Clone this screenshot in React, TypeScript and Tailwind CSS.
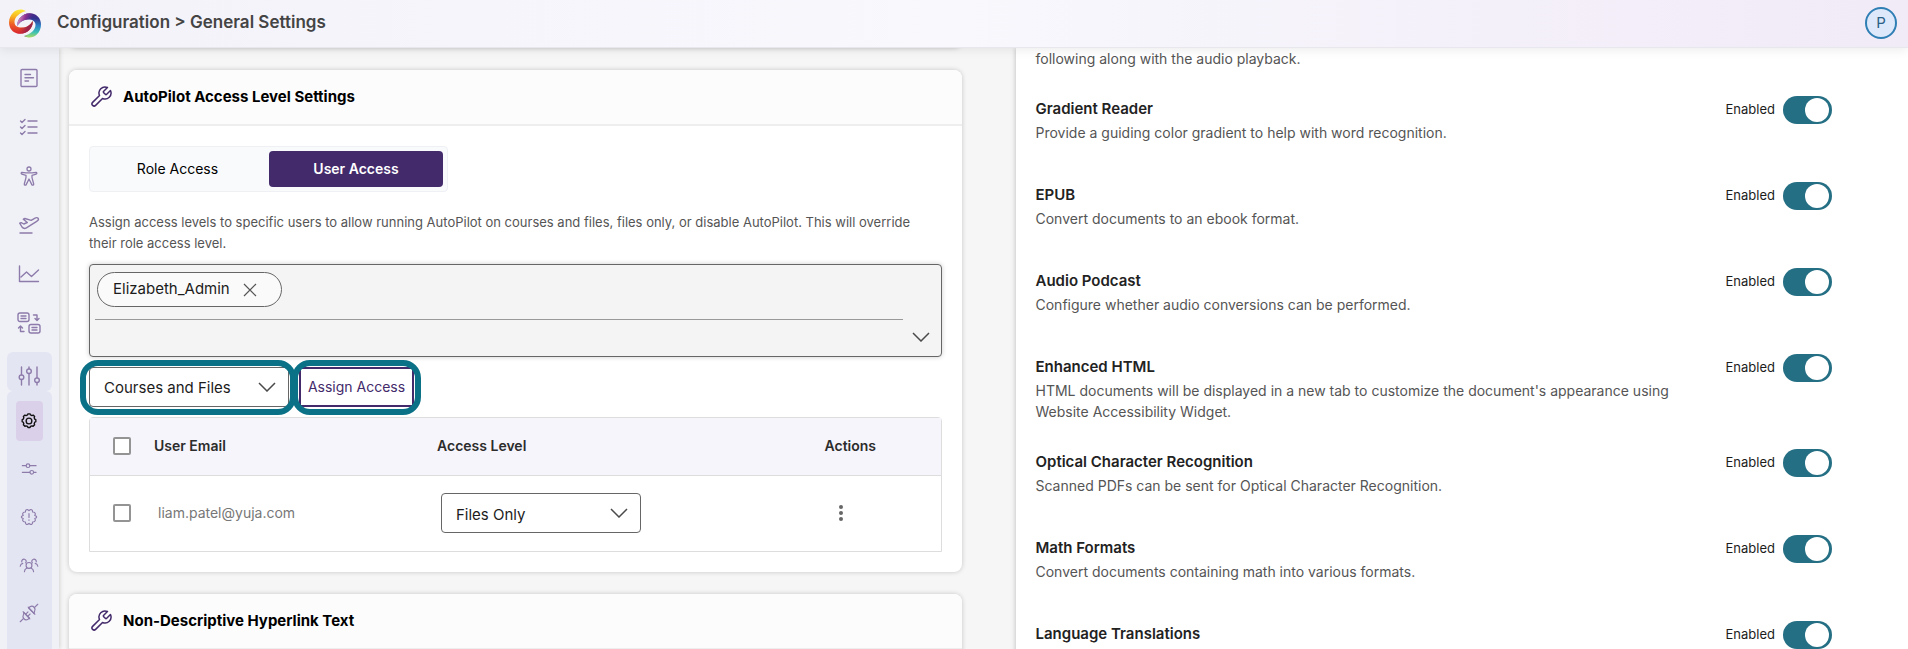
import React, { useState } from "react";

type IconProps = { children: React.ReactNode; size?: string; width?: number };

function Glyph({ children, size = "size-6", width = 1 }: IconProps) {
  return (
    <svg
      viewBox="0 0 24 24"
      fill="none"
      stroke="currentColor"
      strokeWidth={width}
      strokeLinecap="round"
      strokeLinejoin="round"
      className={size}
      aria-hidden="true"
    >
      {children}
    </svg>
  );
}

const gearPath =
  "M10 3.900l.6-1.400h2.800l.6 1.400 2 .8 1.500-.6 2 2-.6 1.500.8 2 1.400.6v2.800l-1.400.6-.8 2 .6 1.500-2 2-1.500-.6-2 .8-.6 1.400h-2.800l-.6-1.400-2-.8-1.500.6-2-2 .6-1.500-.8-2-1.400-.6v-2.800l1.400-.6.8-2-.6-1.500 2-2 1.500.6z";

const topItems: { label: string; icon: React.ReactNode }[] = [
  {
    label: "Reports",
    icon: (
      <Glyph width={1.400}>
        <rect x="4" y="3.500" width="16" height="17" rx="1" />
        <path d="M8 8.500h5.500M8 11.800h8.500M8 15h3.500" />
      </Glyph>
    ),
  },
  {
    label: "Tasks",
    icon: (
      <Glyph width={1.400}>
        <path d="M11 6h9M11 12h9M11 18h9" />
        <path d="M3.500 6l1.500 1.500L8 4.500M3.500 12L5 13.500l3-3M3.500 18L5 19.500l3-3" />
      </Glyph>
    ),
  },
  {
    label: "Accessibility",
    icon: (
      <Glyph width={1.300}>
        <circle cx="12" cy="5" r="2" />
        <path d="M5 8.300c-1 0-1.200 1.500-.2 1.800L9 11.300v2.400L7.300 20c-.2 1.300 1.400 1.600 1.900.6L12 15l2.800 5.600c.5 1 2.100.7 1.900-.6L15 13.700v-2.400l4.200-1.200c1-.3.8-1.800-.2-1.800-2.300.3-4.600.6-7 .6s-4.700-.3-7-.6z" />
      </Glyph>
    ),
  },
  {
    label: "AutoPilot",
    icon: (
      <Glyph width={1.400}>
        <path d="M3 20h12" />
        <path d="M2.700 10.200l1.500-.6 2.600 1.400 3.500-1.500-4-3.300 1.600-.7 6.300 1.800 3.400-2c1.400-.8 3-.8 3.700.2.5 1-.2 2-1.600 2.800L9.400 14.900c-1.500.8-3.300.5-4.400-.9z" />
      </Glyph>
    ),
  },
  {
    label: "Analytics",
    icon: (
      <Glyph width={1.400}>
        <path d="M2.500 4v15.500h19M4 15l5.500-5 5 4.500L21.500 8" />
      </Glyph>
    ),
  },
  {
    label: "Conversions",
    icon: (
      <Glyph width={1.400}>
        <rect x="1" y="2" width="11" height="8.500" rx="2" />
        <rect x="12" y="13.500" width="11" height="8.500" rx="2" />
        <path d="M4 5h5M4 7.500h5M15 16.500h5M15 19h5" />
        <path d="M16.500 4h3.500v5M18 7.500L20 9.500l2-2M7 20.500H3.500v-5.500M1.500 17l2-2 2 2" />
      </Glyph>
    ),
  },
];

const subItems: { label: string; icon: React.ReactNode }[] = [
  {
    label: "General Settings",
    icon: (
      <Glyph size="size-[18px]" width={1.800}>
        <path d={gearPath} />
        <circle cx="12" cy="12" r="3.800" />
      </Glyph>
    ),
  },
  {
    label: "Preferences",
    icon: (
      <Glyph size="size-5" width={1.400}>
        <path d="M4 8h4.500M13 8h7.500M4 16h9M17.500 16h3" />
        <circle cx="10.800" cy="8" r="2.200" />
        <circle cx="15.300" cy="16" r="2.200" />
      </Glyph>
    ),
  },
  {
    label: "Alerts",
    icon: (
      <Glyph size="size-5" width={1.400}>
        <path d="M8.500 3.500c.8-.8 2.200-.6 3.500.8 1.300-1.400 2.700-1.600 3.500-.8s.8 1.500.8 2.500c1.700-.1 2.900.5 3.200 1.600s0 1.800-.6 2.600c1.500.4 2.300 1 2.300 1.800s-.8 1.400-2.300 1.800c.6.8.9 1.500.6 2.600s-1.500 1.700-3.200 1.600c0 1 0 1.700-.8 2.500s-2.200.6-3.500-.8c-1.300 1.400-2.700 1.600-3.500.8s-.8-1.500-.8-2.500c-1.700.1-2.900-.5-3.200-1.600s0-1.800.6-2.600c-1.500-.4-2.300-1-2.300-1.800s.8-1.400 2.300-1.800c-.6-.8-.9-1.500-.6-2.600S6 5.900 7.700 6c0-1 0-1.700.8-2.500z" />
        <path d="M12 8v4.500M12 15.500v.500" />
      </Glyph>
    ),
  },
  {
    label: "Groups",
    icon: (
      <Glyph size="size-5" width={1.400}>
        <circle cx="12" cy="12.500" r="3.500" />
        <path d="M6.500 20c0-2 1-3.500 3-4.500M17.500 20c0-2-1-3.500-3-4.500" />
        <path d="M3.300 8.200a2.700 2.700 0 1 1 4.700 1.300M20.700 8.200A2.700 2.700 0 1 0 16 9.500M1.500 13.500c.2-1.900 1.200-3 3-3.500M22.500 13.500c-.2-1.900-1.200-3-3-3.500" />
      </Glyph>
    ),
  },
  {
    label: "Integrations",
    icon: (
      <Glyph size="size-5" width={1.400}>
        <path d="M1.500 22.500l4-4M22.500 1.500l-4 4" />
        <path d="M6 11.500l6.500 6.500-1.700 1.500c-1.600 1-3.600.8-4.900-.6s-1.500-3.300-.6-4.900zM18 12.500L11.500 6l1.700-1.500c1.600-1 3.600-.8 4.900.6s1.500 3.300.6 4.900z" />
        <path d="M8.500 13l2.300-2.300M11 15.500l2.300-2.300M5 10.500l8 8.500M11 5l8 8.500" />
      </Glyph>
    ),
  },
];

const features: { name: string; text?: string }[] = [
  { name: "Gradient Reader", text: "Provide a guiding color gradient to help with word recognition." },
  { name: "EPUB", text: "Convert documents to an ebook format." },
  { name: "Audio Podcast", text: "Configure whether audio conversions can be performed." },
  {
    name: "Enhanced HTML",
    text: "HTML documents will be displayed in a new tab to customize the document's appearance using Website Accessibility Widget.",
  },
  {
    name: "Optical Character Recognition",
    text: "Scanned PDFs can be sent for Optical Character Recognition.",
  },
  { name: "Math Formats", text: "Convert documents containing math into various formats." },
  { name: "Language Translations" },
];

function Logo() {
  const swirl =
    "M17 2C14 0 8-.5 4.500 3.200C1 6.500-.5 11 .2 15.500C1 21 5.500 25 11.500 24.800C18.500 24.500 24.500 18.500 23.700 12C21 16.500 17.500 18.500 13 18.600C8.500 18.700 5.500 16.800 5.500 13C5.500 8 10.500 4 17 2Z";
  return (
    <svg viewBox="0 0 32 29" className="h-[29px] w-8" aria-hidden="true">
      <defs>
        <linearGradient id="warm" x1="12" y1="0" x2="10" y2="25" gradientUnits="userSpaceOnUse">
          <stop offset="0" stopColor="#f9ee3a" />
          <stop offset="0.300" stopColor="#f8b822" />
          <stop offset="0.650" stopColor="#ee5a26" />
          <stop offset="1" stopColor="#d9242f" />
        </linearGradient>
        <linearGradient id="wine" x1="12" y1="14" x2="24" y2="18" gradientUnits="userSpaceOnUse">
          <stop offset="0" stopColor="#b3203f" stopOpacity="0" />
          <stop offset="0.600" stopColor="#a0224a" />
          <stop offset="1" stopColor="#8d2b50" />
        </linearGradient>
        <linearGradient id="cool" x1="12" y1="0" x2="10" y2="25" gradientUnits="userSpaceOnUse">
          <stop offset="0" stopColor="#b5dc5a" />
          <stop offset="0.250" stopColor="#3cc1b4" />
          <stop offset="0.500" stopColor="#2a86c8" />
          <stop offset="0.800" stopColor="#33308e" />
          <stop offset="1" stopColor="#4b2a86" />
        </linearGradient>
        <linearGradient id="plum" x1="10" y1="14" x2="24" y2="18" gradientUnits="userSpaceOnUse">
          <stop offset="0" stopColor="#6a2a8c" stopOpacity="0" />
          <stop offset="0.500" stopColor="#8d3392" />
          <stop offset="1" stopColor="#e29cc6" />
        </linearGradient>
      </defs>
      <path d={swirl} fill="url(#warm)" />
      <path d={swirl} fill="url(#wine)" />
      <g transform="rotate(180 16 14.500)">
        <path d={swirl} fill="url(#cool)" />
        <path d={swirl} fill="url(#plum)" />
      </g>
    </svg>
  );
}

function Wrench() {
  return (
    <span className="text-[#432a6b]">
      <Glyph size="size-6" width={1.500}>
        <path d="M14.700 6.300a1 1 0 0 0 0 1.400l1.600 1.600a1 1 0 0 0 1.400 0l3.770-3.770a6 6 0 0 1-7.940 7.940l-6.910 6.910a2.120 2.120 0 0 1-3-3l6.910-6.910a6 6 0 0 1 7.940-7.940l-3.760 3.760z" />
      </Glyph>
    </span>
  );
}

function Chevron() {
  return (
    <svg
      viewBox="0 0 18 10"
      fill="none"
      stroke="#4a4a4a"
      strokeWidth="1.500"
      className="h-[10px] w-[18px]"
      aria-hidden="true"
    >
      <path d="M1 1l8 8 8-8" />
    </svg>
  );
}

function LevelSelect({ label, initial }: { label: string; initial: string }) {
  return (
    <div className="relative w-[200px]">
      <select
        aria-label={label}
        defaultValue={initial}
        className="h-10 w-full appearance-none rounded border border-[#666] bg-white pt-[2px] pr-10 pl-[14px] text-[15px] text-[#1c1c1c]"
      >
        <option>Courses and Files</option>
        <option>Files Only</option>
        <option>Disabled</option>
      </select>
      <span className="pointer-events-none absolute top-[15px] right-[13px]">
        <Chevron />
      </span>
    </div>
  );
}

function CheckBox({ label }: { label: string }) {
  return (
    <input
      type="checkbox"
      aria-label={label}
      className="block size-[18px] appearance-none rounded-[2px] border-2 border-[#949494] bg-white checked:bg-[#432a6b]"
    />
  );
}

function CardHeader({ title }: { title: string }) {
  return (
    <div className="flex h-14 items-center gap-[10px] rounded-t-lg border-b-2 border-[#eee] bg-[#fcfcfc] pl-5">
      <Wrench />
      <h2 className="text-[15px] font-bold text-black">{title}</h2>
    </div>
  );
}

const cardClass = "rounded-lg bg-white shadow-[0_0_5px_rgba(0,0,0,0.2)]";

function Feature({ name, text }: { name: string; text?: string }) {
  const [on, setOn] = useState(true);
  const id = name.toLowerCase().replace(/ /g, "-");
  return (
    <div className="flex min-h-[86px] items-start justify-between pb-[27px]">
      <div className="max-w-[640px]">
        <h3 className="text-[15px] leading-[26px] font-semibold text-[#222]">{name}</h3>
        {text && <p className="text-sm leading-[21px] text-[#555]">{text}</p>}
      </div>
      <div className="flex items-center gap-2">
        <label htmlFor={id} className="text-[13px] text-[#1c1c1c]">
          Enabled
        </label>
        <input
          id={id}
          type="checkbox"
          role="switch"
          checked={on}
          onChange={() => setOn(!on)}
          className="flex h-7 w-[49px] appearance-none items-center rounded-full bg-[#8a8a8a] px-[3px] before:size-6 before:rounded-full before:bg-white before:content-[''] checked:justify-end checked:bg-[#256f84]"
        />
      </div>
    </div>
  );
}

export default function App() {
  return (
    <div className="flex h-screen flex-col overflow-hidden bg-[#f6f6f6] font-['Inter',sans-serif]">
      <header className="relative z-10 flex h-12 shrink-0 items-center border-b border-[#e9e7ee] bg-linear-to-r from-[#f4f2f9] via-[#f8f8fd] to-[#f1eaf7] pr-[11px] pb-px pl-[9px] shadow-[0_2px_10px_rgba(0,0,0,0.08)]">
        <Logo />
        <h1 className="ml-4 text-[17px] font-semibold text-[#444]">Configuration &gt; General Settings</h1>
        <button
          type="button"
          aria-label="Profile"
          className="ml-auto size-8 rounded-full border-2 border-[#2f7fb5] bg-[#dde9fb] text-[15px] text-[#2b5f86]"
        >
          P
        </button>
      </header>

      <div className="flex min-h-0 flex-1">
        <nav className="flex w-[59px] shrink-0 flex-col items-center bg-[#f0f1f7] pt-[5px] pr-px text-[#8d7bab] shadow-[0_0_5px_rgba(0,0,0,0.2)]">
          {topItems.map((item) => (
            <a key={item.label} href="#" aria-label={item.label} className="flex h-[49px] w-full items-center justify-center">
              {item.icon}
            </a>
          ))}
          <a
            href="#"
            aria-label="Configuration"
            className="mt-[5px] flex h-[39px] w-[45px] shrink-0 items-center justify-center rounded-md bg-[#e4e5f2] pt-[9px]"
          >
            <Glyph width={1.400}>
              <path d="M4.500 3v8M4.500 15.500V21M12 3v2M12 9.500V21M20 3v11M20 18.500V21" />
              <circle cx="4.500" cy="13.200" r="2.300" />
              <circle cx="12" cy="7.200" r="2.300" />
              <circle cx="20" cy="16.200" r="2.300" />
            </Glyph>
          </a>
          <div className="flex w-[45px] flex-1 flex-col items-center gap-2 rounded-t-md bg-[#e4e5f2] pt-[10px]">
            {subItems.map((item, i) => (
              <a
                key={item.label}
                href="#"
                aria-label={item.label}
                className={
                  i === 0
                    ? "flex h-10 w-[27px] shrink-0 items-center justify-center rounded bg-[#dad0e9] text-[#111]"
                    : "flex h-10 w-[27px] shrink-0 items-center justify-center rounded"
                }
              >
                {item.icon}
              </a>
            ))}
          </div>
        </nav>

        <main className="grid min-w-0 flex-1 grid-cols-2 gap-[54px] pl-[10px]">
          <div className="flex min-w-0 flex-col gap-[22px]">
            <div className={`${cardClass} -mt-6 h-6 shrink-0`} />

            <section className={`${cardClass} shrink-0`}>
              <CardHeader title="AutoPilot Access Level Settings" />
              <div className="px-5 pt-5 pb-5">
                <div className="flex h-[46px] w-[359px] gap-2 rounded border border-[#eef0f4] bg-[#f9fafc] p-1 text-sm">
                  <button type="button" className="flex-1 text-black">
                    Role Access
                  </button>
                  <button type="button" className="w-[174px] rounded bg-[#432a6b] font-semibold text-white">
                    User Access
                  </button>
                </div>

                <p className="mt-5 pr-2 text-[13px] leading-[21px] text-[#555]">
                  Assign access levels to specific users to allow running AutoPilot on courses and files, files only, or
                  disable AutoPilot. This will override their role access level.
                </p>

                <div className="mt-[10px] flex h-[93px] items-end rounded border border-[#666] bg-[#f4f4f4] pr-[11px] shadow-[0_0_5px_rgba(0,0,0,0.2)]">
                  <div className="ml-[5px] flex h-full flex-1 flex-col">
                    <div className="flex h-[55px] items-start border-b border-[#999] pt-[7px] pl-[2px]">
                      <span className="flex h-[35px] w-[185px] items-center gap-[13px] rounded-full border border-[#666] bg-[#fafafa] pl-[15px] text-[15px] text-[#1c1c1c]">
                        Elizabeth_Admin
                        <button type="button" aria-label="Remove Elizabeth_Admin">
                          <svg viewBox="0 0 14 14" stroke="#555" strokeWidth="1.200" className="size-[14px]" aria-hidden="true">
                            <path d="M1 1l12 12M13 1L1 13" />
                          </svg>
                        </button>
                      </span>
                    </div>
                    <input aria-label="Search users" className="w-full flex-1 bg-transparent px-2 text-[15px] outline-none" />
                  </div>
                  <button type="button" aria-label="Show users" className="mb-[14px] ml-[9px]">
                    <Chevron />
                  </button>
                </div>

                <div className="mt-[10px] flex items-center gap-[10px]">
                  <div className="relative">
                    <LevelSelect label="Access level to assign" initial="Courses and Files" />
                    <span className="pointer-events-none absolute -top-[7px] -right-[7px] -bottom-2 -left-[9px] rounded-[18px] border-6 border-[#0b7186]" />
                  </div>
                  <div className="relative">
                    <button
                      type="button"
                      className="h-10 w-[115px] rounded-[2px] border-2 border-[#432a6b] bg-white text-sm text-[#432a6b]"
                    >
                      Assign Access
                    </button>
                    <span className="pointer-events-none absolute -top-[7px] -right-[7px] -bottom-2 -left-[7px] rounded-[18px] border-6 border-[#0b7186]" />
                  </div>
                </div>

                <div className="mt-[10px] rounded-t border border-[#ddd]">
                  <table className="w-full table-fixed text-left text-sm">
                    <colgroup>
                      <col className="w-[64px]" />
                      <col className="w-[283px]" />
                      <col />
                      <col className="w-[116px]" />
                    </colgroup>
                    <thead>
                      <tr className="h-[57px] border-b border-[#ddd] bg-[#f6f5fb] text-[#2c2c2c]">
                        <th className="pl-[23px]">
                          <CheckBox label="Select all users" />
                        </th>
                        <th className="font-semibold">User Email</th>
                        <th className="font-semibold">Access Level</th>
                        <th className="font-semibold">Actions</th>
                      </tr>
                    </thead>
                    <tbody>
                      <tr className="h-[76px]">
                        <td className="pl-[23px]">
                          <CheckBox label="Select liam.patel@yuja.com" />
                        </td>
                        <td className="pl-1 text-[#777]">liam.patel@yuja.com</td>
                        <td className="pl-1">
                          <LevelSelect label="Access level for liam.patel@yuja.com" initial="Files Only" />
                        </td>
                        <td className="pl-[14px]">
                          <button type="button" aria-label="More actions" className="block">
                            <svg viewBox="0 0 4 16" fill="#666" className="h-4 w-1" aria-hidden="true">
                              <circle cx="2" cy="2" r="2" />
                              <circle cx="2" cy="8" r="2" />
                              <circle cx="2" cy="14" r="2" />
                            </svg>
                          </button>
                        </td>
                      </tr>
                    </tbody>
                  </table>
                </div>
              </div>
            </section>

            <section className={`${cardClass} h-40 shrink-0`}>
              <CardHeader title="Non-Descriptive Hyperlink Text" />
            </section>
          </div>

          <section className="bg-white pr-[76px] pl-5 shadow-[0_0_5px_rgba(0,0,0,0.25)]">
            <p className="pb-[27px] text-sm leading-[21px] text-[#555]">following along with the audio playback.</p>
            {features.map((f) => (
              <Feature key={f.name} name={f.name} text={f.text} />
            ))}
          </section>
        </main>
      </div>
    </div>
  );
}
